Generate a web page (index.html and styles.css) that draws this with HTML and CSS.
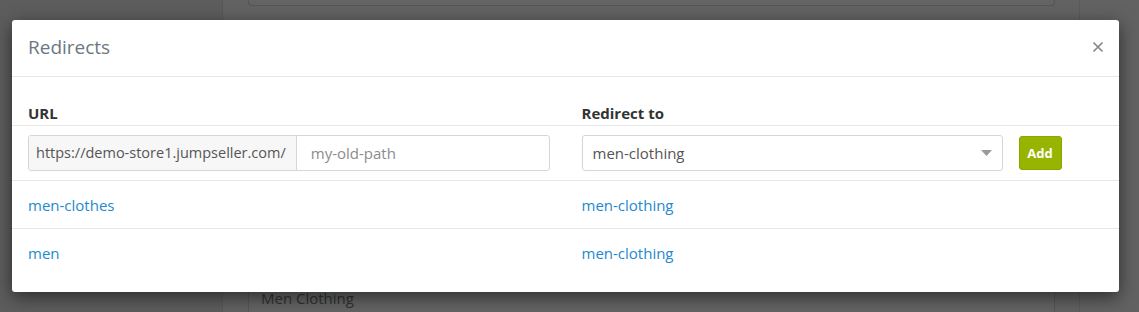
FILE: index.html
```html
<!DOCTYPE html>
<html>
<head>
<meta charset="utf-8">
<link rel="stylesheet" href="styles.css">
</head>
<body>
<div class="app">
  <div class="sidebar"></div>
  <div class="main">
    <div class="card card-top"></div>
    <div class="card card-bottom"><span class="card-title">Men Clothing</span></div>
  </div>
</div>

<div class="modal">
  <div class="modal-header">
    <h4 class="modal-title">Redirects</h4>
    <svg class="close" width="12" height="12" viewBox="0 0 12 12"><path d="M1.5 1.5L10.5 10.5M10.5 1.5L1.5 10.5" stroke="#858585" stroke-width="1.6" fill="none"/></svg>
  </div>
  <table class="redirects">
    <thead>
      <tr><th>URL</th><th>Redirect to</th></tr>
    </thead>
    <tbody>
      <tr class="form-row">
        <td>
          <div class="input-group">
            <span class="addon">https://demo-store1.jumpseller.com/</span>
            <span class="input placeholder">my-old-path</span>
          </div>
        </td>
        <td>
          <div class="target">
            <div class="select">
              <span>men-clothing</span>
              <svg class="caret" width="11" height="6" viewBox="0 0 11 6"><path d="M0 0H11L5.5 6Z" fill="#9a9a9a"/></svg>
            </div>
            <button class="btn-add">Add</button>
          </div>
        </td>
      </tr>
      <tr class="item"><td><a>men-clothes</a></td><td><a>men-clothing</a></td></tr>
      <tr class="item last"><td><a>men</a></td><td><a>men-clothing</a></td></tr>
    </tbody>
  </table>
</div>
</body>
</html>
```

FILE: styles.css
```css
html, body {
  margin: 0;
  padding: 0;
  height: 312px;
  overflow: hidden;
  background: #616261;
  font-family: "Open Sans", "Noto Sans", sans-serif;
}

.app {
  display: flex;
  height: 312px;
}

.sidebar {
  width: 222px;
  background: #5c5d5c;
  border-right: 1px solid #575857;
}

.main {
  box-sizing: border-box;
  width: 857px;
  border-right: 1px solid #595a59;
  padding: 0 24px 0 25px;
  display: flex;
  flex-direction: column;
  justify-content: space-between;
}

.card {
  border: 1px solid #555655;
  background: #636463;
}

.card-top {
  height: 5px;
  border-top: none;
  border-radius: 0 0 4px 4px;
}

.card-bottom {
  height: 26px;
  border-bottom: none;
  padding: 0 12px;
  display: flex;
  align-items: flex-end;
}

.card-title {
  font-size: 15px;
  color: #2f3132;
  line-height: 20px;
  padding-bottom: 4px;
}

.modal {
  position: absolute;
  left: 12px;
  top: 20px;
  width: 1107px;
  height: 272px;
  background: #fff;
  border-radius: 3px;
  box-shadow: 0 5px 18px rgba(0, 0, 0, 0.55);
}

.modal-header {
  display: flex;
  align-items: center;
  justify-content: space-between;
  padding: 15px 15px 16px 16px;
  border-bottom: 1px solid #e6e6e6;
}

.modal-title {
  margin: 0;
  font-size: 19px;
  line-height: 25px;
  font-weight: 400;
  color: #6b7883;
}

.close {
  display: block;
  margin-top: -1px;
}

.redirects {
  width: 100%;
  border-collapse: collapse;
  table-layout: fixed;
}

.redirects th,
.redirects td {
  width: 50%;
  text-align: left;
  padding: 0 16px;
  font-size: 15px;
  line-height: 20px;
}

.redirects th {
  padding-top: 26px;
  padding-bottom: 2px;
  font-weight: 700;
  color: #333;
  border-bottom: 1px solid #e6e6e6;
}

.form-row td {
  padding-top: 9px;
  padding-bottom: 9px;
  border-bottom: 1px solid #e6e6e6;
}

.input-group {
  display: flex;
  height: 36px;
  border: 1px solid #d6d6d6;
  border-radius: 3px;
  box-sizing: border-box;
  overflow: hidden;
}

.addon {
  display: flex;
  align-items: center;
  background: #f7f7f7;
  color: #555;
  font-size: 14.5px;
  padding: 0 10px 0 7px;
  border-right: 1px solid #d6d6d6;
  white-space: nowrap;
}

.input {
  display: flex;
  align-items: center;
  padding: 0 14px;
  flex: 1;
}

.placeholder {
  color: #8c8c8c;
}

.target {
  display: flex;
  align-items: center;
}

.select {
  width: 421px;
  height: 36px;
  box-sizing: border-box;
  border: 1px solid #d6d6d6;
  border-radius: 3px;
  display: flex;
  align-items: center;
  justify-content: space-between;
  padding: 0 10px 0 10px;
  color: #555;
}

.caret {
  display: block;
}

.btn-add {
  margin-left: 16px;
  width: 43px;
  height: 34px;
  background: #97b500;
  border: 1px solid #8aa600;
  border-radius: 3px;
  color: #fff;
  font-family: "Open Sans", "Noto Sans", sans-serif;
  font-weight: 700;
  font-size: 13px;
  padding: 0;
}

.item td {
  padding-top: 14px;
  padding-bottom: 13px;
  border-bottom: 1px solid #e6e6e6;
}

.item.last td {
  border-bottom: none;
}

.item a {
  color: #1d89cf;
  text-decoration: none;
}
```
